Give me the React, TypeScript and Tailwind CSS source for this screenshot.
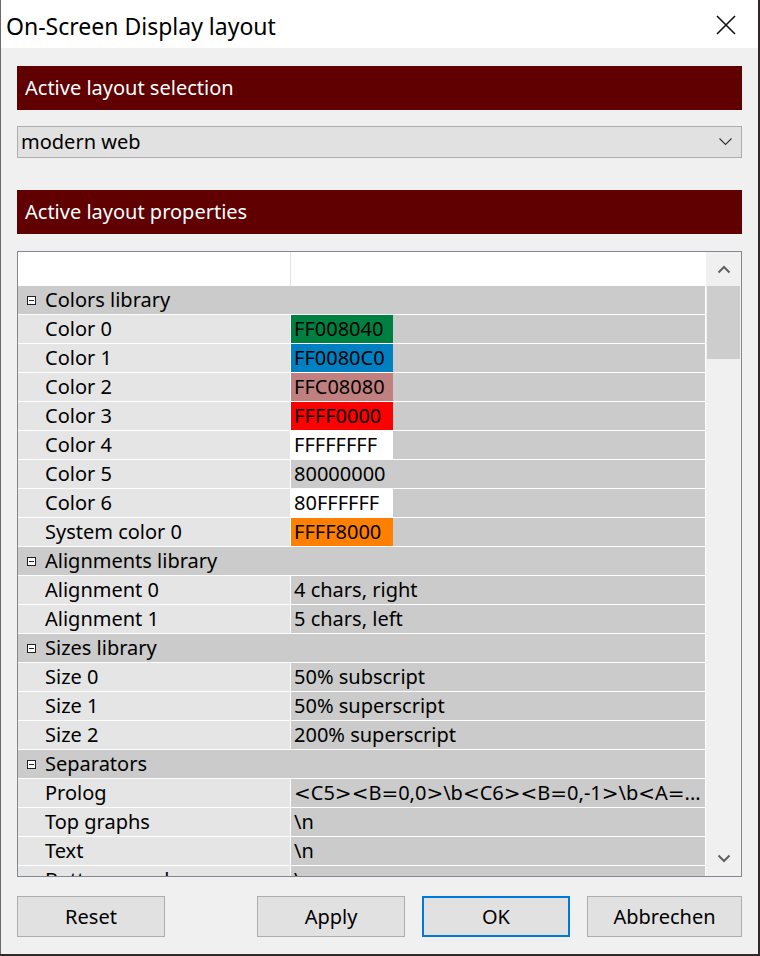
import React from 'react'

type Row =
  | { kind: 'cat'; label: string }
  | { kind: 'item'; label: string; value: string; swatch?: string }

const ROWS: Row[] = [
  { kind: 'cat', label: 'Colors library' },
  { kind: 'item', label: 'Color 0', value: 'FF008040', swatch: 'bg-[#008040]' },
  { kind: 'item', label: 'Color 1', value: 'FF0080C0', swatch: 'bg-[#0080c0]' },
  { kind: 'item', label: 'Color 2', value: 'FFC08080', swatch: 'bg-[#c08080]' },
  { kind: 'item', label: 'Color 3', value: 'FFFF0000', swatch: 'bg-[#ff0000]' },
  { kind: 'item', label: 'Color 4', value: 'FFFFFFFF', swatch: 'bg-white' },
  { kind: 'item', label: 'Color 5', value: '80000000' },
  { kind: 'item', label: 'Color 6', value: '80FFFFFF', swatch: 'bg-white' },
  { kind: 'item', label: 'System color 0', value: 'FFFF8000', swatch: 'bg-[#ff8000]' },
  { kind: 'cat', label: 'Alignments library' },
  { kind: 'item', label: 'Alignment 0', value: '4 chars, right' },
  { kind: 'item', label: 'Alignment 1', value: '5 chars, left' },
  { kind: 'cat', label: 'Sizes library' },
  { kind: 'item', label: 'Size 0', value: '50% subscript' },
  { kind: 'item', label: 'Size 1', value: '50% superscript' },
  { kind: 'item', label: 'Size 2', value: '200% superscript' },
  { kind: 'cat', label: 'Separators' },
  { kind: 'item', label: 'Prolog', value: '<C5><B=0,0>\\b<C6><B=0,-1>\\b<A=...' },
  { kind: 'item', label: 'Top graphs', value: '\\n' },
  { kind: 'item', label: 'Text', value: '\\n' },
  { kind: 'item', label: 'Bottom graphs', value: '\\n' },
]

const font = "font-['Segoe_UI','Noto_Sans',sans-serif]"

// Segoe UI draws < > = much wider than Noto Sans, so borrow DejaVu for those
function Wide({ text }: { text: string }) {
  return (
    <>
      {text.split(/([<>=])/).map((part, i) =>
        /^[<>=]$/.test(part) ? (
          <span key={i} className="font-['DejaVu_Sans',sans-serif]">
            {part}
          </span>
        ) : (
          <React.Fragment key={i}>{part}</React.Fragment>
        ),
      )}
    </>
  )
}

function MinusBox() {
  return (
    <span className="flex h-[9px] w-[9px] items-center justify-center border border-[#222] bg-white">
      <span className="h-px w-[5px] bg-[#222]" />
    </span>
  )
}

function GridRow({ row }: { row: Row }) {
  if (row.kind === 'cat') {
    return (
      <div className="flex h-[29px] shrink-0 items-center border-b border-white bg-[#cbcbcb]">
        <div className="flex w-[27px] justify-end pr-[9px]">
          <MinusBox />
        </div>
        <span>{row.label}</span>
      </div>
    )
  }
  return (
    <div className="flex h-[29px] shrink-0 border-b border-white">
      <div className="flex w-[272px] shrink-0 items-center whitespace-nowrap bg-[#e5e5e5] pl-[27px]">{row.label}</div>
      <div className="w-px shrink-0 bg-white" />
      <div className="flex flex-1 items-center bg-[#cbcbcb]">
        <span className={`flex h-full w-[102px] items-center whitespace-nowrap pl-[3px] ${row.swatch ?? ''}`}>
          <Wide text={row.value} />
        </span>
      </div>
    </div>
  )
}

function Button({ label, width, primary }: { label: string; width: string; primary?: boolean }) {
  return (
    <button
      className={`flex h-[41px] items-center justify-center bg-[#e1e1e1] ${width} ${
        primary ? 'border-2 border-[#0078d7]' : 'border border-[#adadad]'
      }`}
    >
      {label}
    </button>
  )
}

export default function App() {
  return (
    <div className={`min-h-screen bg-[#2f2a28] ${font} text-[20px] text-black`}>
      <div className="flex h-[954px] w-[758px] flex-col border-l border-[#6b6b6b] bg-[#f0f0f0]">
        {/* title bar */}
        <div className="flex h-[48px] shrink-0 items-center justify-between bg-white pl-[5px] pr-[22px]">
          <span className="mt-[4px] text-[23px]">On-Screen Display layout</span>
          <svg width="20" height="20" viewBox="0 0 20 20" className="mt-[1px]">
            <path d="M1 1 L19 19 M19 1 L1 19" stroke="#111" strokeWidth="1.6" />
          </svg>
        </div>

        <div className="flex flex-1 flex-col px-[16px]">
          <div className="mt-[18px] flex h-[44px] items-center bg-[#600000] pl-[8px] text-white">
            Active layout selection
          </div>

          <div className="mt-[16px] flex h-[32px] items-center justify-between border border-[#adadad] bg-[#e1e1e1] pl-[3px] pr-[9px]">
            <span>modern web</span>
            <svg width="13" height="8" viewBox="0 0 13 8">
              <path d="M0.5 0.5 L6.5 6.5 L12.5 0.5" fill="none" stroke="#333" strokeWidth="1.1" />
            </svg>
          </div>

          <div className="mt-[32px] flex h-[44px] items-center bg-[#600000] pl-[8px] text-white">
            Active layout properties
          </div>

          {/* property grid */}
          <div className="mt-[17px] flex h-[626px] border border-[#828790] bg-white">
            <div className="flex flex-1 flex-col overflow-hidden">
              <div className="flex h-[34px] shrink-0 bg-white">
                <div className="w-[272px] shrink-0" />
                <div className="w-px bg-[#e3e3e3]" />
              </div>
              {ROWS.map((r, i) => (
                <GridRow key={i} row={r} />
              ))}
            </div>
            <div className="ml-px flex w-[35px] shrink-0 flex-col bg-[#f0f0f0]">
              <div className="flex h-[34px] shrink-0 items-center justify-center">
                <svg width="14" height="9" viewBox="0 0 14 9">
                  <path d="M1.5 7.5 L7 2 L12.5 7.5" fill="none" stroke="#606060" strokeWidth="2" />
                </svg>
              </div>
              <div className="mx-[1px] h-[73px] bg-[#cdcdcd]" />
              <div className="flex-1" />
              <div className="flex h-[34px] shrink-0 items-center justify-center pb-[2px]">
                <svg width="14" height="9" viewBox="0 0 14 9">
                  <path d="M1.5 1.5 L7 7 L12.5 1.5" fill="none" stroke="#606060" strokeWidth="2" />
                </svg>
              </div>
            </div>
          </div>

          {/* buttons */}
          <div className="mt-[19px] flex items-center">
            <Button label="Reset" width="w-[148px]" />
            <div className="w-[92px]" />
            <Button label="Apply" width="w-[148px]" />
            <div className="w-[17px]" />
            <Button label="OK" width="w-[148px]" primary />
            <div className="w-[17px]" />
            <Button label="Abbrechen" width="w-[155px]" />
          </div>
        </div>
      </div>
    </div>
  )
}
